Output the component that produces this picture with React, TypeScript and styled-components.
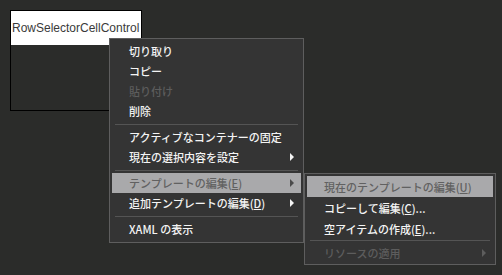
import React from 'react';
import styled, { createGlobalStyle } from 'styled-components';

type Entry =
  | { kind: 'sep' }
  | { kind: 'item'; label: React.ReactNode; disabled?: boolean; active?: boolean; sub?: boolean };

const GlobalStyle = createGlobalStyle`
  html, body {
    margin: 0;
    padding: 0;
    background: #2b2c2a;
  }
  #root {
    width: 502px;
    height: 275px;
  }
`;

const Stage = styled.div`
  position: relative;
  width: 502px;
  height: 275px;
  padding: 10px;
  box-sizing: border-box;
  background: #2b2c2a;
  overflow: hidden;
`;

const DesignBox = styled.div`
  width: 132px;
  height: 101px;
  box-sizing: border-box;
  border: 1px solid #000;
  display: flex;
  flex-direction: column;
`;

const DesignHeader = styled.div`
  height: 34px;
  background: #ffffff;
  display: flex;
  align-items: center;
  padding-left: 1px;
  font-family: 'Liberation Sans', Arial, sans-serif;
  font-size: 12px;
  color: #3a3a3a;
  white-space: nowrap;
  overflow: hidden;
`;

const Menu = styled.div<{ $left: number; $top: number; $width: number; $padBottom: number }>`
  position: absolute;
  left: ${(p) => p.$left}px;
  top: ${(p) => p.$top}px;
  width: ${(p) => p.$width}px;
  box-sizing: border-box;
  padding: 2px 2px ${(p) => p.$padBottom}px;
  background: #343434;
  border: 1px solid #5e5e5e;
  font-family: 'Noto Sans CJK JP', 'Noto Sans', sans-serif;
  font-size: 11px;
  font-weight: 500;
`;

const Item = styled.div<{ $h: number; $disabled?: boolean; $active?: boolean }>`
  height: ${(p) => p.$h}px;
  display: flex;
  align-items: center;
  justify-content: space-between;
  padding: 0 7px 0 17px;
  white-space: nowrap;
  background: ${(p) => (p.$active ? '#a9a9ab' : 'transparent')};
  color: ${(p) => (p.$disabled ? '#5d5d5d' : p.$active ? '#616161' : '#f4f4f4')};
`;

const Separator = styled.div<{ $h: number }>`
  height: ${(p) => p.$h}px;
  display: flex;
  align-items: center;
  padding: 0 3px;

  &::after {
    content: '';
    flex: 1;
    height: 1px;
    background: #545454;
  }
`;

const Arrow = styled.span<{ $disabled?: boolean; $active?: boolean }>`
  width: 0;
  height: 0;
  border-top: 4px solid transparent;
  border-bottom: 4px solid transparent;
  border-left: 4px solid ${(p) => (p.$disabled ? '#5d5d5d' : p.$active ? '#4a4a4a' : '#f4f4f4')};
`;

const Key = styled.span`
  text-decoration: underline;
  text-underline-offset: 1px;
`;

const mainMenu: Entry[] = [
  { kind: 'item', label: '切り取り' },
  { kind: 'item', label: 'コピー' },
  { kind: 'item', label: '貼り付け', disabled: true },
  { kind: 'item', label: '削除' },
  { kind: 'sep' },
  { kind: 'item', label: 'アクティブなコンテナーの固定' },
  { kind: 'item', label: '現在の選択内容を設定', sub: true },
  { kind: 'sep' },
  { kind: 'item', label: <>テンプレートの編集(<Key>E</Key>)</>, active: true, sub: true },
  { kind: 'item', label: <>追加テンプレートの編集(<Key>D</Key>)</>, sub: true },
  { kind: 'sep' },
  { kind: 'item', label: 'XAML の表示' },
];

const subMenu: Entry[] = [
  { kind: 'item', label: <>現在のテンプレートの編集(<Key>U</Key>)</>, active: true },
  { kind: 'item', label: <>コピーして編集(<Key>C</Key>)...</> },
  { kind: 'item', label: <>空アイテムの作成(<Key>E</Key>)...</> },
  { kind: 'sep' },
  { kind: 'item', label: 'リソースの適用', disabled: true, sub: true },
];

const renderEntries = (entries: Entry[], itemH: number, sepH: number) =>
  entries.map((e, i) =>
    e.kind === 'sep' ? (
      <Separator key={i} $h={sepH} />
    ) : (
      <Item key={i} $h={itemH} $disabled={e.disabled} $active={e.active}>
        <span>{e.label}</span>
        {e.sub && <Arrow $disabled={e.disabled} $active={e.active} />}
      </Item>
    )
  );

const App: React.FC = () => {
  return (
    <>
      <GlobalStyle />
      <Stage>
        <DesignBox>
          <DesignHeader>RowSelectorCellControl</DesignHeader>
        </DesignBox>

        <Menu $left={109} $top={38} $width={195} $padBottom={3}>
          {renderEntries(mainMenu, 20, 6)}
        </Menu>

        <Menu $left={304} $top={173} $width={192} $padBottom={1}>
          {renderEntries(subMenu, 21, 3)}
        </Menu>
      </Stage>
    </>
  );
};

export default App;
